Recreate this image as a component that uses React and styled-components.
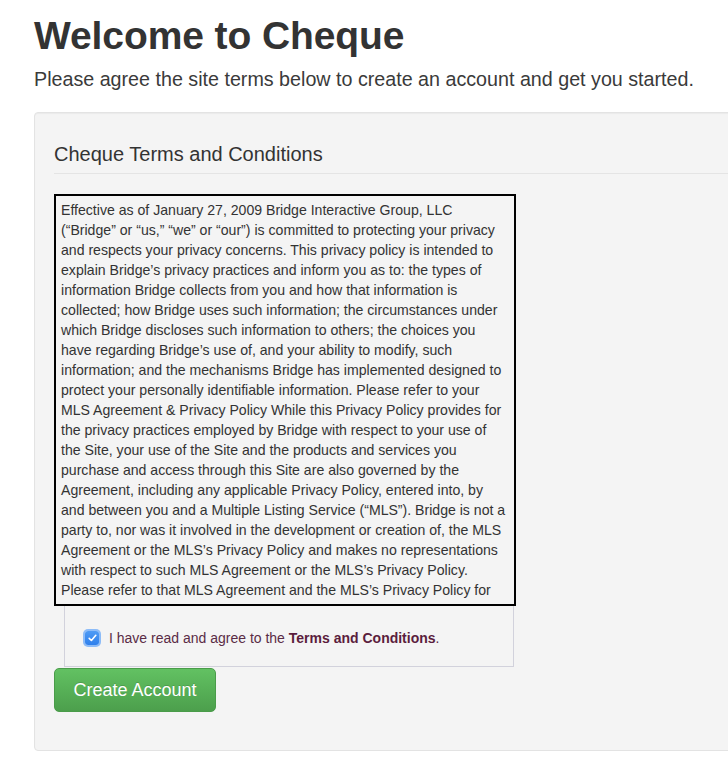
import React from "react";
import styled, { createGlobalStyle } from "styled-components";

const Global = createGlobalStyle`
  html, body { margin: 0; padding: 0; overflow: hidden; background: #fff; }
  body { font-family: "Liberation Sans", Arial, sans-serif; color: #333; }
  * { box-sizing: border-box; }
`;

const Page = styled.div`
  width: 760px;
  padding: 14px 0 0 34px;
`;

const Title = styled.h1`
  margin: 0;
  font-size: 39px;
  line-height: 44px;
  font-weight: 700;
  color: #333;
  letter-spacing: -0.1px;
`;

const Lead = styled.p`
  margin: 7px 0 0;
  font-size: 19.7px;
  line-height: 28px;
  font-weight: 400;
  color: #3a3a3a;
`;

const Well = styled.section`
  margin-top: 19px;
  background: #f4f4f4;
  border: 1px solid #e3e3e3;
  border-radius: 4px;
  box-shadow: inset 0 1px 1px rgba(0, 0, 0, 0.04);
  padding: 19px 19px 38px;
`;

const WellTitle = styled.h3`
  margin: 11px 0 0;
  font-size: 20px;
  line-height: 22px;
  font-weight: 400;
  color: #333;
`;

const Rule = styled.hr`
  margin: 8px -19px 20px 0;
  border: 0;
  border-top: 1px solid #e4e4e4;
`;

const TermsBox = styled.div`
  width: 462px;
  height: 412px;
  border: 2px solid #000;
  padding: 4px 5px;
  overflow: hidden;
  font-size: 14.1px;
  line-height: 20px;
  color: #333;
  white-space: nowrap;
`;

const AgreeBox = styled.div`
  margin-left: 10px;
  width: 450px;
  height: 61px;
  border: 1px solid #d2d2dc;
  border-top: 0;
  display: flex;
  align-items: center;
  padding: 4px 0 0 20px;
  gap: 10px;
`;

const Check = styled.span`
  width: 14px;
  height: 14px;
  border-radius: 3px;
  background: linear-gradient(#4f9bf5, #2f80ec);
  box-shadow: 0 0 0 2px #8dbcf8;
  display: inline-flex;
  align-items: center;
  justify-content: center;
`;

const Label = styled.label`
  font-size: 14px;
  line-height: 20px;
  color: #5a2c46;
`;

const Strong = styled.strong`
  font-weight: 700;
  color: #5b1d3d;
`;

const Button = styled.button`
  margin-top: 1px;
  display: block;
  width: 162px;
  height: 44px;
  font-family: "Liberation Sans", Arial, sans-serif;
  font-size: 18px;
  color: #fff;
  background: linear-gradient(#62c162, #4c9f4c);
  border: 1px solid #4a9c4a;
  border-radius: 5px;
  text-shadow: 0 -1px 0 rgba(0, 0, 0, 0.15);
  padding: 0;
`;

const lines = [
  "Effective as of January 27, 2009 Bridge Interactive Group, LLC",
  "(\u201cBridge\u201d or \u201cus,\u201d \u201cwe\u201d or \u201cour\u201d) is committed to protecting your privacy",
  "and respects your privacy concerns. This privacy policy is intended to",
  "explain Bridge\u2019s privacy practices and inform you as to: the types of",
  "information Bridge collects from you and how that information is",
  "collected; how Bridge uses such information; the circumstances under",
  "which Bridge discloses such information to others; the choices you",
  "have regarding Bridge\u2019s use of, and your ability to modify, such",
  "information; and the mechanisms Bridge has implemented designed to",
  "protect your personally identifiable information. Please refer to your",
  "MLS Agreement & Privacy Policy While this Privacy Policy provides for",
  "the privacy practices employed by Bridge with respect to your use of",
  "the Site, your use of the Site and the products and services you",
  "purchase and access through this Site are also governed by the",
  "Agreement, including any applicable Privacy Policy, entered into, by",
  "and between you and a Multiple Listing Service (\u201cMLS\u201d). Bridge is not a",
  "party to, nor was it involved in the development or creation of, the MLS",
  "Agreement or the MLS\u2019s Privacy Policy and makes no representations",
  "with respect to such MLS Agreement or the MLS\u2019s Privacy Policy.",
  "Please refer to that MLS Agreement and the MLS\u2019s Privacy Policy for",
];

export default function App() {
  return (
    <>
      <Global />
      <Page>
        <Title>Welcome to Cheque</Title>
        <Lead>Please agree the site terms below to create an account and get you started.</Lead>
        <Well>
          <WellTitle>Cheque Terms and Conditions</WellTitle>
          <Rule />
          <TermsBox>
            {lines.map((l, i) => (
              <React.Fragment key={i}>
                {l}
                <br />
              </React.Fragment>
            ))}
          </TermsBox>
          <AgreeBox>
            <Check>
              <svg width="9" height="8" viewBox="0 0 9 8">
                <path d="M1.2 4.4 L3.4 6.5 L7.8 1.3" fill="none" stroke="#fff" strokeWidth="1.6" strokeLinecap="round" strokeLinejoin="round" />
              </svg>
            </Check>
            <Label>
              I have read and agree to the <Strong>Terms and Conditions</Strong>.
            </Label>
          </AgreeBox>
          <Button>Create Account</Button>
        </Well>
      </Page>
    </>
  );
}
